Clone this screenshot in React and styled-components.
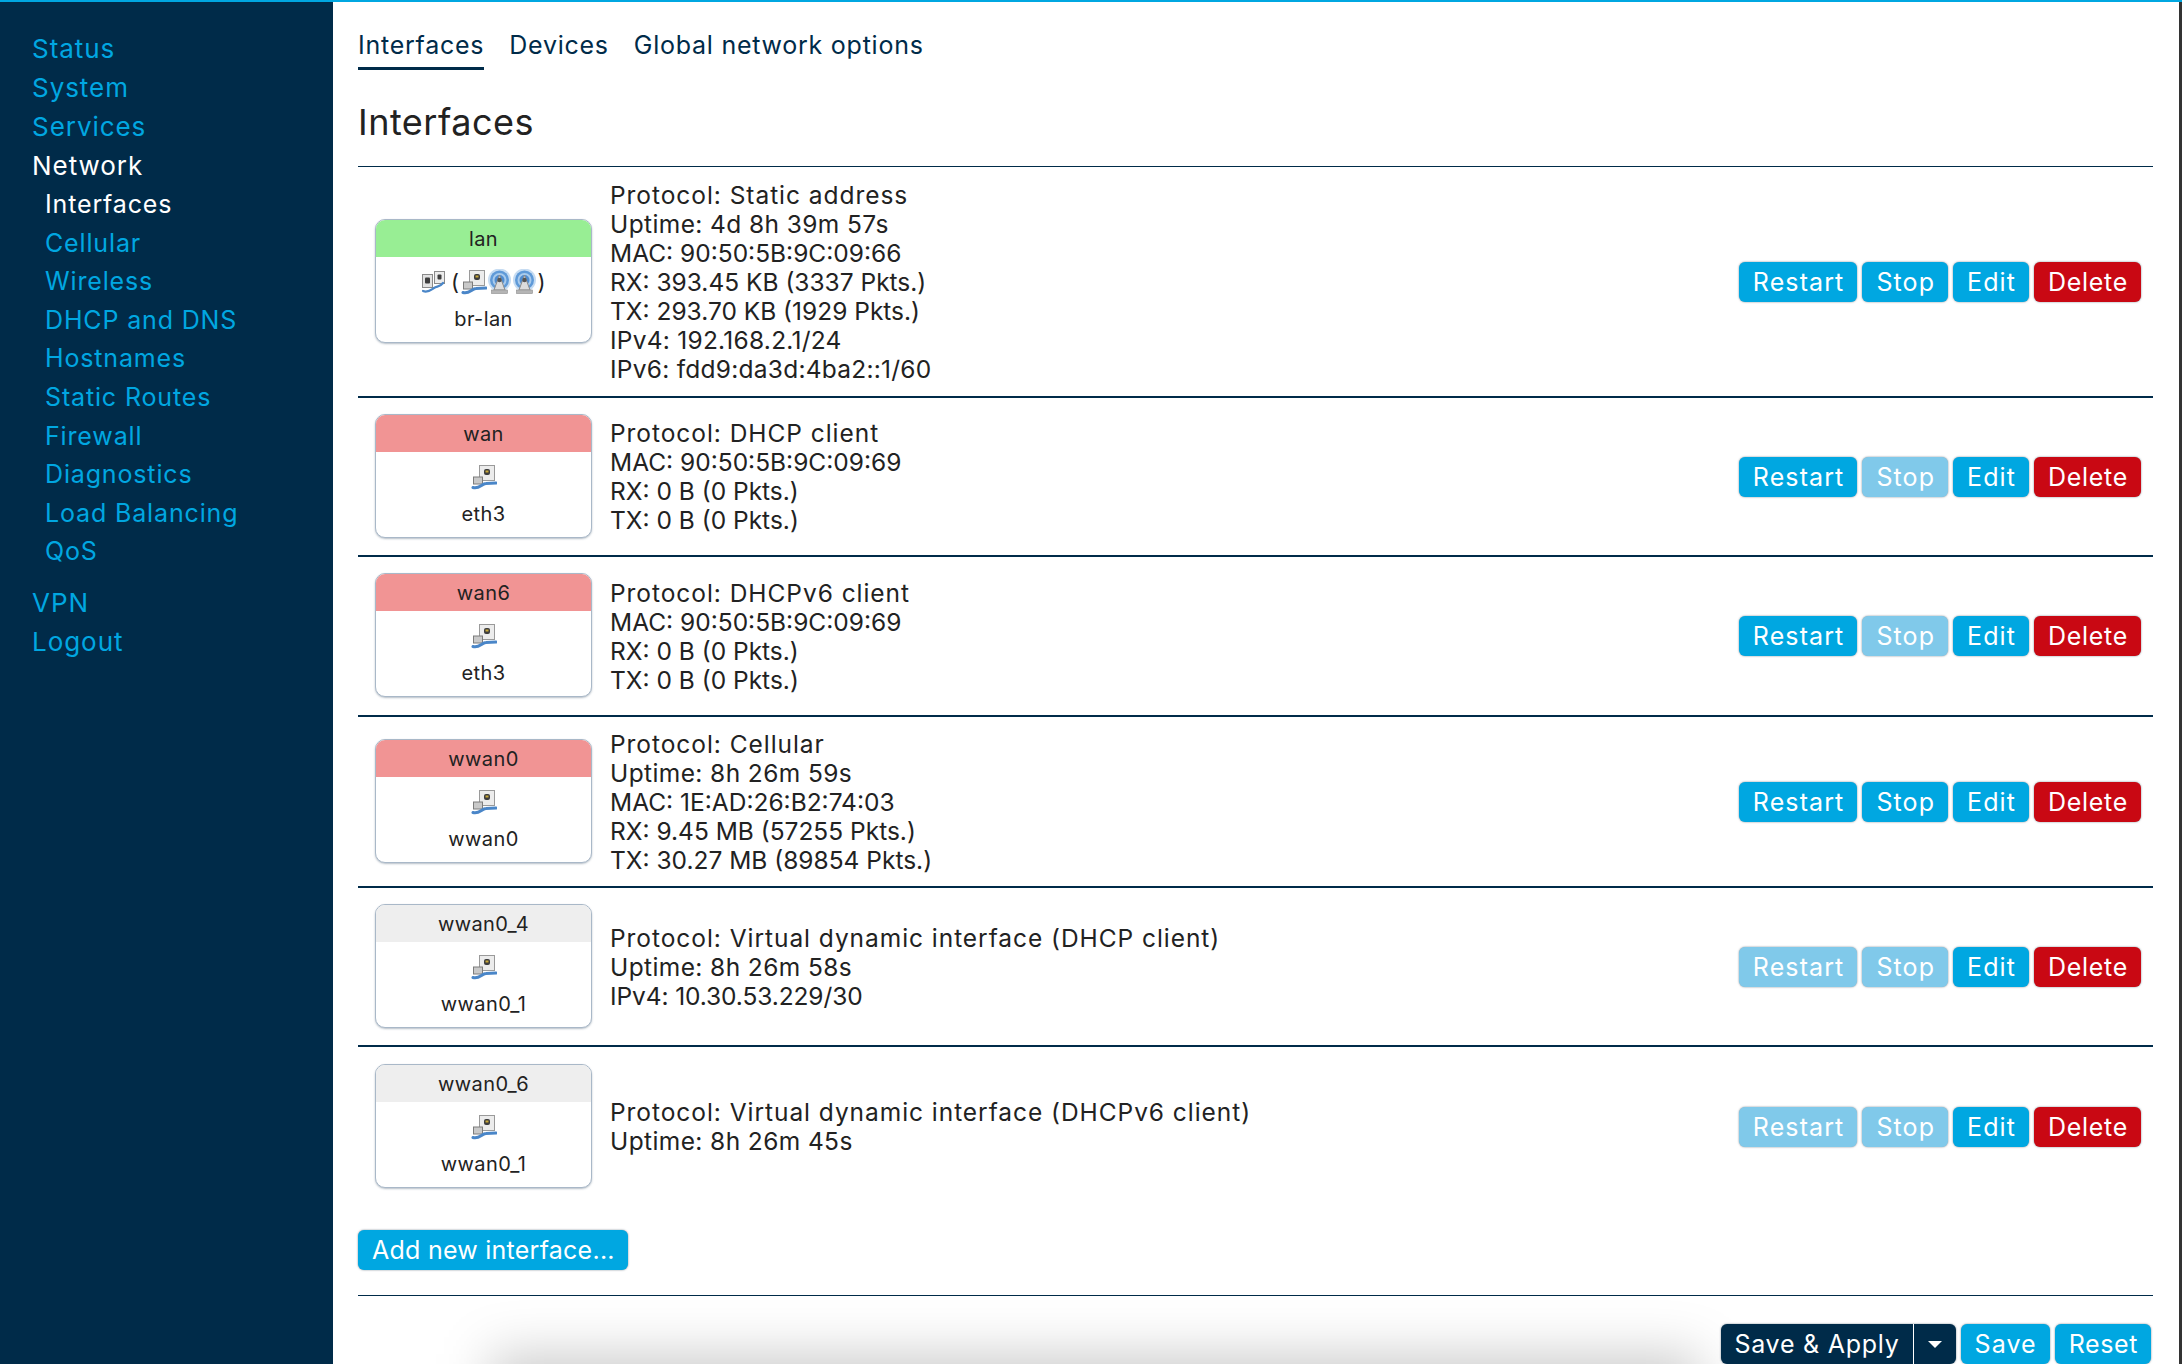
import React from 'react';
import styled, { createGlobalStyle } from 'styled-components';

const GlobalStyle = createGlobalStyle`
	html, body {
		margin: 0;
		padding: 0;
		background: #fff;
	}
	body {
		font-family: Inter, "Liberation Sans", sans-serif;
		color: #222;
	}
`;

const Page = styled.div`
	display: flex;
	width: 2182px;
	height: 1364px;
	overflow: hidden;
	position: relative;
	box-sizing: border-box;
	border-top: 2px solid #00a7e1;
`;

const Sidebar = styled.nav`
	width: 333px;
	flex: none;
	background: #002b49;
	padding: 27px 0 0 32px;
	box-sizing: border-box;
`;

const MenuItem = styled.a`
	display: block;
	height: 39px;
	line-height: 39px;
	font-size: 26px;
	letter-spacing: 0.95px;
	color: ${(p) => (p.$active ? '#fff' : '#00a7e1')};
`;

const SubMenu = styled.div`
	padding-left: 13px;
	margin-bottom: 12px;
`;

const SubItem = styled(MenuItem)`
	height: 38.6px;
	line-height: 38.6px;
	font-size: 25px;
	letter-spacing: 0.85px;
`;

const Main = styled.main`
	flex: 1;
	padding: 0 26px 0 25px;
	min-width: 0;
	position: relative;
`;

const Tabs = styled.div`
	display: flex;
	gap: 25px;
	padding-top: 27px;
`;

const Tab = styled.a`
	font-size: 25px;
	line-height: 32px;
	height: 41px;
	letter-spacing: 0.75px;
	color: #002b49;
	box-sizing: border-box;
	border-bottom: ${(p) => (p.$active ? '3px solid #002b49' : 'none')};
`;

const Title = styled.h2`
	margin: 0;
	padding-top: 31px;
	height: 96px;
	box-sizing: border-box;
	font-size: 36px;
	line-height: 42px;
	font-weight: 400;
	letter-spacing: 0.5px;
	color: #222;
`;

const Table = styled.div`
	border-top: 1px solid #002b49;
`;

const Row = styled.div`
	display: flex;
	align-items: center;
	height: ${(p) => p.$height}px;
	box-sizing: border-box;
	border-bottom: ${(p) => (p.$last ? 'none' : '2px solid #002b49')};
	padding: 0 12px 0 17px;
`;

const Badge = styled.div`
	width: 217px;
	height: 124px;
	margin-bottom: 2px;
	flex: none;
	box-sizing: border-box;
	border: 1px solid #a9b8c8;
	border-radius: 10px;
	box-shadow: 0 1px 2px rgba(90, 110, 130, 0.45);
	overflow: hidden;
	text-align: center;
	font-size: 20px;
	letter-spacing: 0.4px;
	background: #fff;
`;

const BadgeHead = styled.div`
	height: 37px;
	line-height: 39px;
	background: ${(p) => p.$color};
`;

const BadgeIcons = styled.div`
	display: flex;
	justify-content: center;
	align-items: center;
	height: 44px;
	padding-top: 6px;
	box-sizing: border-box;
`;

const Paren = styled.span`
	font-size: 22px;
	line-height: 1;
	margin: ${(p) => (p.$close ? '0 0 0 1px' : '0 1px 0 5px')};
`;

const BadgeName = styled.div`
	line-height: 36px;
`;

const Info = styled.div`
	flex: 1;
	padding: 1px 0 0 18px;
	font-size: 24.5px;
	line-height: 29px;
	color: #222;
`;

const InfoLine = styled.div`
	letter-spacing: ${(p) => p.$spacing}px;
`;

const Actions = styled.div`
	display: flex;
	gap: 5px;
`;

const Btn = styled.button`
	height: 40px;
	padding: 0 13px 0 14px;
	border: none;
	border-radius: 6px;
	font-family: inherit;
	font-size: 25px;
	line-height: 40px;
	letter-spacing: ${(p) => p.$spacing ?? 1.1}px;
	color: #fff;
	background: ${(p) => (p.$danger ? '#c90813' : p.$off ? '#80c9ea' : '#00a7e1')};
	box-shadow: 0 0 2px rgba(0, 30, 50, 0.55);
`;

const AddRow = styled.div`
	padding-top: 24px;
	height: 89px;
	box-sizing: border-box;
`;

const Footer = styled.div`
	display: flex;
	justify-content: flex-end;
	gap: 5px;
	border-top: 1px solid #002b49;
	padding: 28px 2px 0 0;
	position: relative;
	z-index: 1;
`;

const Split = styled.div`
	display: flex;
	border-radius: 6px;
	overflow: hidden;
	background: #002b49;
	box-shadow: 0 0 2px rgba(0, 30, 50, 0.55);
`;

const SplitMain = styled.span`
	height: 40px;
	line-height: 40px;
	padding: 0 13px;
	font-size: 25px;
	letter-spacing: 0.75px;
	color: #fff;
	border-right: 1px solid #fff;
`;

const SplitCaret = styled.span`
	width: 42px;
	display: flex;
	align-items: center;
	justify-content: center;
	&::after {
		content: '';
		border-left: 7px solid transparent;
		border-right: 7px solid transparent;
		border-top: 7px solid #fff;
	}
`;

// soft grey glow that comes up from under the bottom edge of the page
const BottomShade = styled.div`
	position: absolute;
	left: 157px;
	width: 1210px;
	bottom: -90px;
	height: 100px;
	background: rgba(0, 0, 0, 0.2);
	filter: blur(26px);
`;

const EdgeStrip = styled.div`
	width: 3px;
	flex: none;
	background: #333;
	margin-top: -2px;
	position: relative;
	z-index: 2;
`;

const IconSvg = styled.svg`
	flex: none;
	filter: blur(0.35px);
`;

const PortIcon = () => (
	<IconSvg width="26" height="26" viewBox="0 0 26 26">
		<rect x="8.5" y="1.5" width="15" height="15" fill="#ececec" stroke="#9a9a9a" />
		<rect x="13" y="5" width="6" height="6" rx="2" fill="#3d3d3d" />
		<rect x="14.5" y="6.5" width="3" height="2" fill="#c9a93a" />
		<rect x="2.5" y="13" width="9" height="7" fill="#c9c9c9" stroke="#7c7c7c" />
		<path d="M2 23.5 C8 25.5, 11 19.5, 15 19.5 L25 19" fill="none" stroke="#4a86c8" strokeWidth="3" strokeLinecap="round" />
	</IconSvg>
);

const BridgeIcon = () => (
	<IconSvg width="25" height="24" viewBox="0 0 25 24">
		<rect x="13.5" y="1.5" width="10" height="12" fill="#ececec" stroke="#8a8a8a" />
		<rect x="16.5" y="4.5" width="4" height="5" rx="1" fill="#3d3d3d" />
		<rect x="1.5" y="4.5" width="10" height="13" fill="#e2e2e2" stroke="#8a8a8a" />
		<rect x="4" y="7.5" width="5" height="6" rx="1" fill="#3d3d3d" />
		<path d="M2 21 C7 23, 10 20, 13 18 C16 16, 19 17, 22 13" fill="none" stroke="#4a86c8" strokeWidth="2.2" strokeLinecap="round" />
	</IconSvg>
);

const WifiIcon = () => (
	<IconSvg width="25" height="26" viewBox="0 0 25 26">
		<circle cx="12.5" cy="11" r="11.5" fill="#c6dcf2" />
		<circle cx="12.5" cy="11" r="9.5" fill="#5f9ad8" />
		<circle cx="12.5" cy="11" r="7" fill="#a9cbec" />
		<circle cx="12.5" cy="11" r="5" fill="#4f8cd0" />
		<path d="M12.5 6 L7 21 H18 Z" fill="#dcdcdc" stroke="#8c8c8c" />
		<circle cx="12.5" cy="11" r="2.2" fill="#555" />
		<rect x="4.5" y="21" width="16" height="3.5" fill="#b5b5b5" stroke="#8c8c8c" strokeWidth="0.6" />
	</IconSvg>
);

const rows = [
	{ name: 'lan', color: '#98ee94', dev: 'br-lan', height: 231, bridge: true, actions: [1, 1], lines: ['Protocol: Static address', 'Uptime: 4d 8h 39m 57s', 'MAC: 90:50:5B:9C:09:66', 'RX: 393.45 KB (3337 Pkts.)', 'TX: 293.70 KB (1929 Pkts.)', 'IPv4: 192.168.2.1/24', 'IPv6: fdd9:da3d:4ba2::1/60'] },
	{ name: 'wan', color: '#f19494', dev: 'eth3', height: 159, actions: [1, 0], lines: ['Protocol: DHCP client', 'MAC: 90:50:5B:9C:09:69', 'RX: 0 B (0 Pkts.)', 'TX: 0 B (0 Pkts.)'] },
	{ name: 'wan6', color: '#f19494', dev: 'eth3', height: 160, actions: [1, 0], lines: ['Protocol: DHCPv6 client', 'MAC: 90:50:5B:9C:09:69', 'RX: 0 B (0 Pkts.)', 'TX: 0 B (0 Pkts.)'] },
	{ name: 'wwan0', color: '#f19494', dev: 'wwan0', height: 171, actions: [1, 1], lines: ['Protocol: Cellular', 'Uptime: 8h 26m 59s', 'MAC: 1E:AD:26:B2:74:03', 'RX: 9.45 MB (57255 Pkts.)', 'TX: 30.27 MB (89854 Pkts.)'] },
	{ name: 'wwan0_4', color: '#eeeeee', dev: 'wwan0_1', height: 159, actions: [0, 0], lines: ['Protocol: Virtual dynamic interface (DHCP client)', 'Uptime: 8h 26m 58s', 'IPv4: 10.30.53.229/30'] },
	{ name: 'wwan0_6', color: '#eeeeee', dev: 'wwan0_1', height: 159, last: true, actions: [0, 0], lines: ['Protocol: Virtual dynamic interface (DHCPv6 client)', 'Uptime: 8h 26m 45s'] },
];

const menuTop = ['Status', 'System', 'Services'];
const subMenu = ['Interfaces', 'Cellular', 'Wireless', 'DHCP and DNS', 'Hostnames', 'Static Routes', 'Firewall', 'Diagnostics', 'Load Balancing', 'QoS'];

const lineSpacing = (line) => {
	if (line.startsWith('Protocol')) return 0.95;
	if (line.startsWith('Uptime')) return 0.4;
	if (line.startsWith('IPv4: 10')) return -0.1;
	if (line.startsWith('IPv')) return 0.25;
	return 0;
};

const App = () => {
	return (
		<Page>
			<GlobalStyle />
			<Sidebar>
				{menuTop.map((m) => <MenuItem key={m}>{m}</MenuItem>)}
				<MenuItem $active>Network</MenuItem>
				<SubMenu>
					{subMenu.map((m, i) => <SubItem key={m} $active={i === 0}>{m}</SubItem>)}
				</SubMenu>
				<MenuItem>VPN</MenuItem>
				<MenuItem>Logout</MenuItem>
			</Sidebar>
			<Main>
				<BottomShade />
				<Tabs>
					<Tab $active>Interfaces</Tab>
					<Tab>Devices</Tab>
					<Tab>Global network options</Tab>
				</Tabs>
				<Title>Interfaces</Title>
				<Table>
					{rows.map((r) => (
						<Row key={r.name} $height={r.height} $last={r.last}>
							<Badge>
								<BadgeHead $color={r.color}>{r.name}</BadgeHead>
								<BadgeIcons>
									{r.bridge ? (
										<>
											<BridgeIcon />
											<Paren>(</Paren>
											<PortIcon />
											<WifiIcon />
											<WifiIcon />
											<Paren $close>)</Paren>
										</>
									) : <PortIcon />}
								</BadgeIcons>
								<BadgeName>{r.dev}</BadgeName>
							</Badge>
							<Info>
								{r.lines.map((l) => <InfoLine key={l} $spacing={lineSpacing(l)}>{l}</InfoLine>)}
							</Info>
							<Actions>
								<Btn $off={!r.actions[0]}>Restart</Btn>
								<Btn $off={!r.actions[1]}>Stop</Btn>
								<Btn>Edit</Btn>
								<Btn $danger $spacing={0.7}>Delete</Btn>
							</Actions>
						</Row>
					))}
				</Table>
				<AddRow>
					<Btn $spacing={0.25}>Add new interface...</Btn>
				</AddRow>
				<Footer>
					<Split>
						<SplitMain>Save &amp; Apply</SplitMain>
						<SplitCaret />
					</Split>
					<Btn>Save</Btn>
					<Btn $spacing={0.6}>Reset</Btn>
				</Footer>
			</Main>
			<EdgeStrip />
		</Page>
	);
};

export default App;
